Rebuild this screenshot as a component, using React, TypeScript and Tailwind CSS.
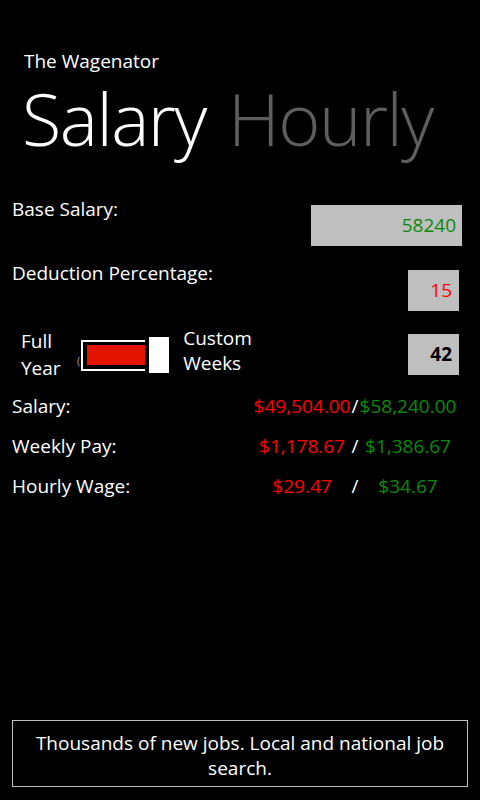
import React from "react";

const font = { fontFamily: '"Open Sans", "Noto Sans", sans-serif' };

const results = [
  { label: "Salary:", net: "$49,504.00", gross: "$58,240.00" },
  { label: "Weekly Pay:", net: "$1,178.67", gross: "$1,386.67" },
  { label: "Hourly Wage:", net: "$29.47", gross: "$34.67" },
];

function Toggle() {
  return (
    <div className="flex items-center h-[36px] shrink-0">
      <span className="text-[11px] leading-none text-gray-400 mt-[10px] mr-[1px]">(</span>
      <div className="flex items-center h-[31px] w-[64px] shrink-0 border-2 border-r-0 border-white pl-[4px] py-[4px]">
        <div className="h-[20px] w-[58px] shrink-0 bg-[#e51400]" />
      </div>
      <div className="ml-[4px] h-[36px] w-[20px] shrink-0 bg-white" />
    </div>
  );
}

export default function App() {
  return (
    <div className="min-h-[800px] w-[480px] bg-black text-white flex flex-col" style={font}>
      <div className="pt-[48px]">
        <p className="pl-[24px] text-[19px] leading-[26px]">The Wagenator</p>
        <div className="pl-[22px] mt-[8px] flex gap-[22px] text-[72px] leading-[72px] font-light tracking-[-1.5px]">
          <span>Salary</span>
          <span className="text-[#5e5e5e]">Hourly</span>
        </div>
      </div>

      <div className="px-[12px] mt-[42px] flex flex-col">
        <div className="flex justify-between items-start h-[64px]">
          <span className="text-[19px] leading-[26px]">Base Salary:</span>
          <div className="mt-[9px] mr-[6px] h-[41px] w-[151px] bg-[#bfbfbf] flex items-center justify-end pr-[6px] text-[19px] text-[#0a8a0a]">
            58240
          </div>
        </div>
        <div className="flex justify-between items-start h-[66px]">
          <span className="text-[19px] leading-[26px]">Deduction Percentage:</span>
          <div className="mt-[10px] mr-[9px] h-[41px] w-[51px] bg-[#bfbfbf] flex items-center justify-end pr-[7px] text-[19px] text-[#ff0000]">
            15
          </div>
        </div>
        <div className="flex items-start h-[60px]">
          <div className="ml-[9px] w-[56px] shrink-0 text-[19px] leading-[27px] mt-[2px]">
            Full
            <br />
            Year
          </div>
          <div className="mt-[11px]">
            <Toggle />
          </div>
          <div className="ml-[14px] text-[19px] leading-[25px]">
            Custom
            <br />
            Weeks
          </div>
          <div className="ml-auto mt-[8px] mr-[9px] h-[41px] w-[51px] bg-[#bfbfbf] flex items-center justify-end pr-[7px] text-[19px] font-bold text-black">
            42
          </div>
        </div>
        <div className="flex flex-col">
          {results.map((r) => (
            <div key={r.label} className="flex items-center h-[40px] text-[19px]">
              <span className="w-[240px] shrink-0">{r.label}</span>
              <div className="grid grid-cols-[100px_6px_100px] items-center whitespace-nowrap">
                <span className="flex justify-center text-[#ff0000]">{r.net}</span>
                <span className="flex justify-center">/</span>
                <span className="flex justify-center text-[#0a8a0a]">{r.gross}</span>
              </div>
            </div>
          ))}
        </div>
      </div>

      <div className="mt-auto mx-[12px] mb-[13px] border border-[#bfbfbf] h-[67px] flex items-center justify-center text-center px-[20px] pt-[5px] text-[19px] leading-[25px]">
        Thousands of new jobs. Local and national job search.
      </div>
    </div>
  );
}
